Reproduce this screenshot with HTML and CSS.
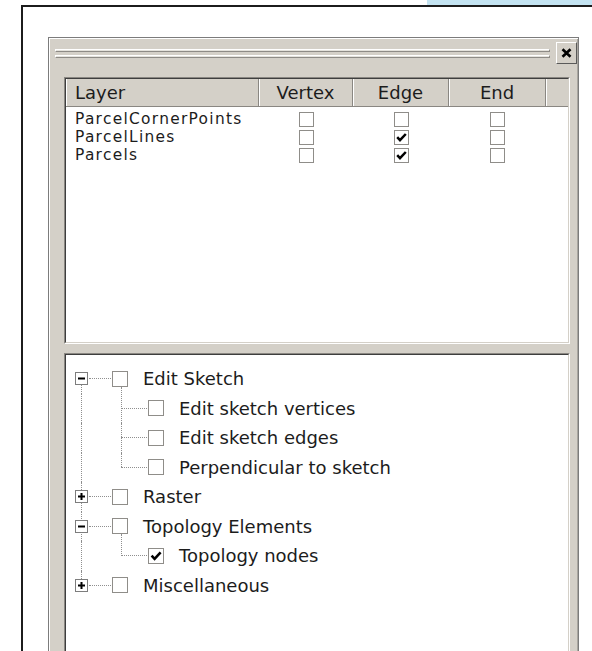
FILE: index.html
```html
<!DOCTYPE html>
<html lang="en">
<head>
<meta charset="utf-8">
<title>Snapping</title>
<link rel="stylesheet" href="styles.css">
</head>
<body>
<div class="topbar"><div class="band"></div></div>
<div class="frame">
  <div class="panel">
    <div class="titlebar">
      <div class="grip"><span class="grip-line"></span><span class="grip-line"></span></div>
      <button class="close" type="button" aria-label="Close">
        <svg width="11" height="10" viewBox="0 0 11 10"><path d="M1.5 1.2 L9.5 8.8 M9.5 1.2 L1.5 8.8" stroke="#000" stroke-width="2.6" fill="none"/></svg>
      </button>
    </div>

    <div class="sunken layers">
      <div class="sunken-inner">
        <div class="layers-head">
          <div class="hcell hname">Layer</div>
          <div class="hcell">Vertex</div>
          <div class="hcell">Edge</div>
          <div class="hcell">End</div>
          <div class="hcell hfill"></div>
        </div>
        <div class="layer-rows">
          <div class="layer-row">
            <span class="lname">ParcelCornerPoints</span>
            <span class="lcb"><i class="cb"></i></span>
            <span class="lcb"><i class="cb"></i></span>
            <span class="lcb"><i class="cb"></i></span>
          </div>
          <div class="layer-row">
            <span class="lname">ParcelLines</span>
            <span class="lcb"><i class="cb"></i></span>
            <span class="lcb"><i class="cb checked"><svg width="13" height="13" viewBox="0 0 13 13"><path d="M2.2 6.2 L5 9.2 L10.8 3" stroke="#000" stroke-width="2.5" fill="none"/></svg></i></span>
            <span class="lcb"><i class="cb"></i></span>
          </div>
          <div class="layer-row">
            <span class="lname">Parcels</span>
            <span class="lcb"><i class="cb"></i></span>
            <span class="lcb"><i class="cb checked"><svg width="13" height="13" viewBox="0 0 13 13"><path d="M2.2 6.2 L5 9.2 L10.8 3" stroke="#000" stroke-width="2.5" fill="none"/></svg></i></span>
            <span class="lcb"><i class="cb"></i></span>
          </div>
        </div>
      </div>
    </div>

    <div class="sunken tree">
      <div class="sunken-inner tree-inner">
        <div class="node">
          <span class="g0 down"><i class="exp"><svg width="11" height="11" viewBox="0 0 11 11"><rect x="2" y="4.5" width="7" height="2" fill="#000"/></svg></i><i class="hline"></i></span>
          <i class="tcb"></i><span class="label">Edit Sketch</span>
        </div>
        <div class="node">
          <span class="g0 pass"></span><span class="g1 mid first"><i class="hline"></i></span>
          <i class="tcb"></i><span class="label">Edit sketch vertices</span>
        </div>
        <div class="node">
          <span class="g0 pass"></span><span class="g1 mid"><i class="hline"></i></span>
          <i class="tcb"></i><span class="label">Edit sketch edges</span>
        </div>
        <div class="node">
          <span class="g0 pass"></span><span class="g1 last"><i class="hline"></i></span>
          <i class="tcb"></i><span class="label">Perpendicular to sketch</span>
        </div>
        <div class="node">
          <span class="g0 both"><i class="exp"><svg width="11" height="11" viewBox="0 0 11 11"><rect x="2" y="4.5" width="7" height="2" fill="#000"/><rect x="4.5" y="2" width="2" height="7" fill="#000"/></svg></i><i class="hline"></i></span>
          <i class="tcb"></i><span class="label">Raster</span>
        </div>
        <div class="node">
          <span class="g0 both"><i class="exp"><svg width="11" height="11" viewBox="0 0 11 11"><rect x="2" y="4.5" width="7" height="2" fill="#000"/></svg></i><i class="hline"></i></span>
          <i class="tcb"></i><span class="label">Topology Elements</span>
        </div>
        <div class="node">
          <span class="g0 pass"></span><span class="g1 last first"><i class="hline"></i></span>
          <i class="tcb"><svg width="14" height="14" viewBox="0 0 14 14"><path d="M2.6 6.6 L5.6 9.8 L11.6 3.4" stroke="#000" stroke-width="2.6" fill="none"/></svg></i><span class="label">Topology nodes</span>
        </div>
        <div class="node">
          <span class="g0 up"><i class="exp"><svg width="11" height="11" viewBox="0 0 11 11"><rect x="2" y="4.5" width="7" height="2" fill="#000"/><rect x="4.5" y="2" width="2" height="7" fill="#000"/></svg></i><i class="hline"></i></span>
          <i class="tcb"></i><span class="label">Miscellaneous</span>
        </div>
      </div>
    </div>
  </div>
</div>
</body>
</html>
```

FILE: styles.css
```css
* { box-sizing: border-box; }

html, body {
  margin: 0;
  height: 651px;
  overflow: hidden;
  background: #fff;
  font-family: "DejaVu Sans", Verdana, sans-serif;
  color: #1c1c1c;
}

/* strip of the neighbouring window along the top edge */
.topbar {
  height: 5px;
  display: flex;
  justify-content: flex-end;
}
.band {
  width: 165px;
  background: #c3e3f1;
}

.frame {
  margin-left: 21px;
  height: 646px;
  border-top: 2px solid #1c1c1c;
  border-left: 2px solid #1c1c1c;
  padding: 30px 0 0 25px;
}

/* docked window */
.panel {
  width: 531px;
  height: 640px;
  background: #d4d0c8;
  border: 1px solid #7c7c7c;
  box-shadow: inset 1px 1px 0 #fff, inset -1px 0 0 #a9a6a0;
  padding-top: 4px;
}

.titlebar {
  display: flex;
  align-items: center;
  height: 22px;
  padding: 0 1px 0 6px;
  margin-bottom: 13px;
}
.grip {
  flex: 1;
  margin-right: 6px;
  display: flex;
  flex-direction: column;
  gap: 3px;
}
.grip-line {
  display: block;
  height: 3px;
  border-top: 1px solid #fff;
  border-left: 1px solid #fff;
  border-bottom: 1px solid #8e8b86;
  border-right: 1px solid #8e8b86;
  background: #e4e2dc;
}
.close {
  width: 21px;
  height: 22px;
  padding: 0;
  margin: 0;
  display: grid;
  place-items: center;
  background: #d4d0c8;
  border: 1px solid;
  border-color: #fff #5a5a5a #5a5a5a #fff;
}

/* two-tone sunken well */
.sunken {
  margin-left: 15px;
  width: 506px;
  border: 1px solid;
  border-color: #8a8782 #fff #fff #8a8782;
  background: #fff;
}
.sunken-inner {
  height: 100%;
  border: 1px solid;
  border-color: #3e3e3e #d4d0c8 #d4d0c8 #3e3e3e;
}

.layers { height: 267px; }

.layers-head,
.layer-row {
  display: grid;
  grid-template-columns: 193px 94px 96px 97px 1fr;
}
.layers-head {
  height: 28px;
  border-bottom: 1px solid #8a8782;
  background: #d4d0c8;
}
.hcell {
  display: flex;
  align-items: center;
  justify-content: center;
  font-size: 18px;
  border-right: 1px solid #8a8782;
  box-shadow: inset 1px 0 0 #fff;
  padding-bottom: 1px;
}
.hname {
  justify-content: flex-start;
  padding-left: 9px;
}
.hfill { border-right: 0; }

.layer-rows { padding-top: 3px; }
.layer-row {
  height: 18px;
  align-items: center;
  font-size: 15.4px;
  letter-spacing: 1.3px;
}
.lname {
  padding-left: 9px;
  white-space: nowrap;
  line-height: 18px;
}
.lcb {
  display: flex;
  justify-content: center;
}
.cb {
  display: grid;
  place-items: center;
  width: 15px;
  height: 15px;
  border: 1px solid #8f8d89;
  background: #fff;
}

/* tree of snapping options */
.tree {
  margin-top: 9px;
  height: 320px;
}
.tree-inner { padding-top: 9px; }

.node {
  display: flex;
  align-items: center;
  height: 29.5px;
  font-size: 18px;
}

.g0, .g1 {
  position: relative;
  align-self: stretch;
  display: flex;
  align-items: center;
}
.g0 { width: 46px; padding-left: 9px; }
.g1 { width: 36px; padding-left: 9px; }

.g0::before, .g1::before {
  content: "";
  position: absolute;
  width: 0;
  border-left: 1px dotted #8f8f8f;
}
.g0::before { left: 15px; }
.g1::before { left: 9px; }

.down::before { top: 50%; bottom: 0; }
.both::before, .pass::before, .mid::before { top: 0; bottom: 0; }
.up::before, .last::before { top: 0; bottom: 50%; }
.g1.first::before { top: -7px; }

.exp {
  position: relative;
  z-index: 1;
  width: 13px;
  height: 13px;
  display: grid;
  place-items: center;
  border: 1px solid #7d7d7d;
  background: #fff;
}
.hline {
  flex: 1;
  height: 0;
  margin-left: 1px;
  margin-right: 1px;
  border-top: 1px dotted #8f8f8f;
}
.g1 .hline { margin-left: 0; }

.tcb {
  display: grid;
  place-items: center;
  width: 16px;
  height: 16px;
  border: 1px solid #8f8d89;
  background: #fff;
  flex: none;
}
.label {
  margin-left: 15px;
  white-space: nowrap;
}
```
